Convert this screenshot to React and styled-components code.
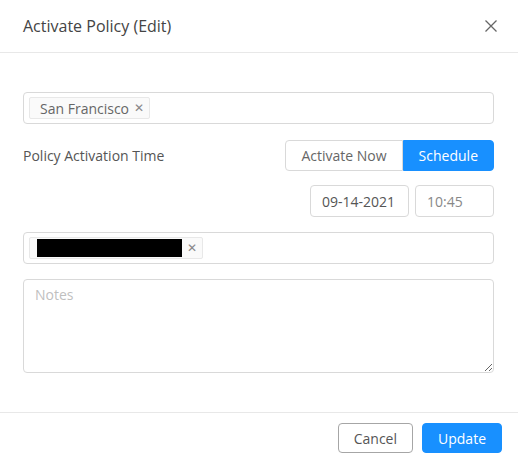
import React from "react";
import styled, { createGlobalStyle } from "styled-components";

const GlobalStyle = createGlobalStyle`
  body {
    margin: 0;
    background: #fff;
    font-family: "Open Sans", "Liberation Sans", sans-serif;
    font-size: 14px;
    color: #555;
  }
`;

const Modal = styled.div`
  width: 518px;
  height: 461px;
  background: #fff;
  display: flex;
  flex-direction: column;
`;

const Header = styled.div`
  height: 53px;
  box-sizing: border-box;
  border-bottom: 1px solid #e8e8e8;
  display: flex;
  align-items: center;
  justify-content: space-between;
  padding: 0 20px 0 23px;
`;

const Title = styled.h3`
  margin: 0;
  font-size: 16px;
  font-weight: 400;
  color: #444;
`;

const CloseButton = styled.button`
  border: none;
  background: none;
  padding: 0;
  width: 14px;
  height: 14px;
  display: flex;
  cursor: pointer;
`;

const Body = styled.div`
  padding: 39px 24px 39px 23px;
  display: flex;
  flex-direction: column;
`;

const TagBox = styled.div`
  height: 32px;
  box-sizing: border-box;
  border: 1px solid #d9d9d9;
  border-radius: 4px;
  display: flex;
  align-items: center;
  padding: 0 5px;
  margin-bottom: ${(p) => p.$gap || 0}px;
`;

const Tag = styled.span`
  height: 22px;
  box-sizing: border-box;
  border: 1px solid #e8e8e8;
  background: #fafafa;
  border-radius: 2px;
  display: inline-flex;
  align-items: center;
  padding: 0 5px 0 ${(p) => p.$padLeft || 10}px;
  font-size: 14px;
  color: #666;
`;

const TagClose = styled.span`
  margin-left: 5px;
  font-size: 12px;
  color: #888;
  line-height: 1;
`;

const Redacted = styled.span`
  display: inline-block;
  width: 145px;
  height: 18px;
  background: #000;
`;

const Row = styled.div`
  display: flex;
  align-items: center;
  justify-content: space-between;
  margin-bottom: 14px;
`;

const Label = styled.span`
  color: #555;
`;

const Segmented = styled.div`
  display: flex;
  height: 31px;
`;

const Segment = styled.button`
  font-family: inherit;
  font-size: 14px;
  height: 100%;
  padding: 0 ${(p) => p.$pad}px;
  border: 1px solid ${(p) => (p.$active ? "#1890ff" : "#d9d9d9")};
  background: ${(p) => (p.$active ? "#1890ff" : "#fff")};
  color: ${(p) => (p.$active ? "#fff" : "#666")};
  border-radius: ${(p) => (p.$first ? "4px 0 0 4px" : "0 4px 4px 0")};
  cursor: pointer;
`;

const DateRow = styled.div`
  display: flex;
  justify-content: flex-end;
  gap: 6px;
  margin-bottom: 15px;
`;

const Field = styled.div`
  width: ${(p) => p.$w}px;
  height: 32px;
  box-sizing: border-box;
  border: 1px solid #d9d9d9;
  border-radius: 4px;
  display: flex;
  align-items: center;
  padding-left: ${(p) => p.$pad}px;
  color: ${(p) => p.$color};
`;

const Notes = styled.textarea`
  height: 94px;
  margin-top: 15px;
  box-sizing: border-box;
  border: 1px solid #d9d9d9;
  border-radius: 4px;
  padding: 5px 11px;
  font-family: inherit;
  font-size: 14px;
  color: #555;
  resize: vertical;
  outline: none;

  &::placeholder {
    color: #bfbfbf;
  }
`;

const Footer = styled.div`
  border-top: 1px solid #e8e8e8;
  display: flex;
  justify-content: flex-end;
  gap: 9px;
  padding: 10px 16px 0 0;
`;

const Button = styled.button`
  height: 30px;
  padding: 0 ${(p) => p.$pad}px;
  font-family: inherit;
  font-size: 14px;
  border-radius: 4px;
  border: 1px solid ${(p) => (p.$primary ? "#1890ff" : "#a6a6a6")};
  background: ${(p) => (p.$primary ? "#1890ff" : "#fff")};
  color: ${(p) => (p.$primary ? "#fff" : "#555")};
  cursor: pointer;
`;

export default function App() {
  return (
    <>
      <GlobalStyle />
      <Modal>
        <Header>
          <Title>Activate Policy (Edit)</Title>
          <CloseButton aria-label="Close">
            <svg width="14" height="14" viewBox="0 0 14 14">
              <path d="M1.5 1.5L12.5 12.5M12.5 1.5L1.5 12.5" stroke="#666" strokeWidth="1.3" fill="none" />
            </svg>
          </CloseButton>
        </Header>
        <Body>
          <TagBox $gap={16}>
            <Tag>
              San Francisco<TagClose>✕</TagClose>
            </Tag>
          </TagBox>
          <Row>
            <Label>Policy Activation Time</Label>
            <Segmented>
              <Segment $first $pad={15}>Activate Now</Segment>
              <Segment $active $pad={15}>Schedule</Segment>
            </Segmented>
          </Row>
          <DateRow>
            <Field $w={99} $pad={11} $color="#555">09-14-2021</Field>
            <Field $w={79} $pad={11} $color="#888">10:45</Field>
          </DateRow>
          <TagBox>
            <Tag $padLeft={7}>
              <Redacted />
              <TagClose>✕</TagClose>
            </Tag>
          </TagBox>
          <Notes placeholder="Notes" />
        </Body>
        <Footer>
          <Button $pad={15}>Cancel</Button>
          <Button $primary $pad={15}>Update</Button>
        </Footer>
      </Modal>
    </>
  );
}
